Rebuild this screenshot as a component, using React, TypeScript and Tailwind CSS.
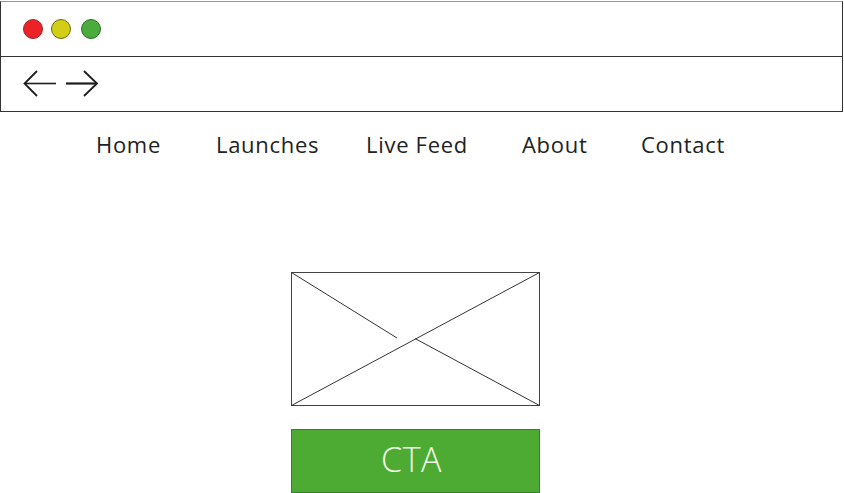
const NAV = [
  { label: "Home", w: "w-[120px]" },
  { label: "Launches", w: "w-[150px]" },
  { label: "Live Feed", w: "w-[156px]" },
  { label: "About", w: "w-[119px]" },
  { label: "Contact", w: "w-[100px]" },
];

export default function App() {
  return (
    <div className="w-[844px] h-[493px] bg-white overflow-hidden" style={{ fontFamily: '"Open Sans", sans-serif' }}>
      {/* browser chrome */}
      <div className="mt-px w-[843px] border border-[#333] border-t-[#999]">
        <div className="h-[55px] flex items-center gap-2 pl-[22px] border-b border-[#333]">
          <span className="w-5 h-5 rounded-full bg-[#ec2227] border border-[#9a2a2a]" />
          <span className="w-5 h-5 rounded-full bg-[#d2cd16] border border-[#6e6a10]" />
          <span className="ml-[2px] w-5 h-5 rounded-full bg-[#4bab3c] border border-[#2f6e28]" />
        </div>
        <div className="h-[54px] flex items-center pl-[22px]">
          <svg width="80" height="30" viewBox="0 0 80 30" className="block">
            <g fill="none" stroke="#1e1e1e" strokeLinecap="butt" strokeLinejoin="miter">
              <path d="M33 14.5H2" strokeWidth="1.6" />
              <path d="M14 2L1.5 14.5L14 27" strokeWidth="1.8" />
              <path d="M43 14.5H74" strokeWidth="2.2" />
              <path d="M61 2L74 14.5L61 27" strokeWidth="1.8" />
            </g>
          </svg>
        </div>
      </div>

      {/* nav */}
      <nav className="flex pl-[96px] mt-[17px] h-[30px] items-center text-[22px] tracking-[0.7px] text-[#222]">
        {NAV.map((n) => (
          <span key={n.label} className={n.w}>
            {n.label}
          </span>
        ))}
      </nav>

      {/* hero */}
      <div className="flex flex-col items-center mt-[113px] pr-[13px]">
        <svg width="249" height="134" viewBox="0 0 249 134" className="block">
          <rect x="0.5" y="0.5" width="248" height="133" fill="white" stroke="#444" strokeWidth="1" />
          <line x1="0.5" y1="0.5" x2="106" y2="66" stroke="#333" strokeWidth="1" />
          <line x1="248.5" y1="0.5" x2="0.5" y2="133.5" stroke="#333" strokeWidth="1" />
          <line x1="124" y1="66.5" x2="248.5" y2="133.5" stroke="#333" strokeWidth="1" />
        </svg>
        <button className="mt-[23px] w-[249px] h-[64px] bg-[#4dab33] border border-[#3a7d2a] text-[#f2fbe9] text-[34px] tracking-[0.5px] font-light leading-none flex items-center justify-center pb-[5px] pr-2">
          CTA
        </button>
      </div>
    </div>
  );
}
